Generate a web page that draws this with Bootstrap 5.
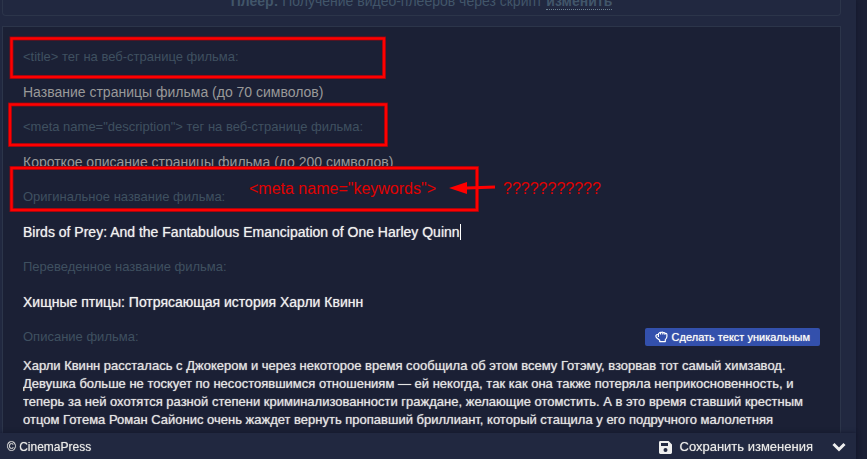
<!DOCTYPE html>
<html lang="ru">
<head>
<meta charset="utf-8">
<meta name="viewport" content="width=device-width, initial-scale=1">
<title>CinemaPress</title>
<link href="https://cdn.jsdelivr.net/npm/bootstrap@5.3.0/dist/css/bootstrap.min.css" rel="stylesheet">
<style>
body { background: #1b2035; color: #dcdcdc; font: 14px/18px "Liberation Sans", Arial, sans-serif; }
.app-main { background: #212840; margin-right: 11px; min-height: 100vh; box-shadow: 0 0 5px #12162a; padding: 0 15px 26px 2px; }
.hint-box { display: flow-root; border: 1px solid #2c354a; border-top: 0; border-radius: 0 0 4px 4px; color: #42566a; height: 16px; margin-bottom: 10px; }
.hint-box p { margin-top: -8px; }
.hint-box a { color: inherit; border-bottom: 1px dotted #6b7f90; }
.film-panel { background: #1b2035; border: 1px solid #2c354a; border-bottom: 0; padding: 21px 20px 0; gap: 10px; }
.film-label { color: #3f5060; font-size: 13px; line-height: 18px; }
.film-input { background: none; border: 0; outline: 0; padding: 0; height: 32px; line-height: 32px; color: #f0f0f0; text-shadow: 0 0 1px #bbb; resize: none; }
.film-input::placeholder { color: #999; opacity: 1; text-shadow: none; }
.film-text { height: 77px; line-height: 18px; padding-top: 1px; font-size: 13px; color: #e4e4e4; overflow: hidden; }
.title-field { width: 437px; box-sizing: content-box; border-right: 1px solid #fff; height: 16px; line-height: 16px; margin: 8px 0; }
.btn-unique { background: #3350ac; color: #fff; font-size: 11px; line-height: 18px; border-radius: 2px; padding: 0 10px; text-shadow: 0 0 1px #ccc; }
.app-footer { background: #212840; right: 11px; height: 26px; padding: 2px 7px 0; box-shadow: 0 0 4px #12162a; font-size: 12px; text-shadow: 0 0 1px #aaa; color: #e8e8e8; }
.btn-bar { color: inherit; font-size: 13px; line-height: 18px; text-shadow: inherit; }
.marks { position: absolute; inset: 0 auto auto 0; pointer-events: none; }
.marks text { font-size: 16px; fill: #e00000; }
</style>
<script src="https://cdn.jsdelivr.net/npm/bootstrap@5.3.0/dist/js/bootstrap.bundle.min.js"></script>
</head>
<body class="vh-100 overflow-hidden position-relative">
<main class="app-main">
  <div class="hint-box text-center"><p class="mb-0"><b>Плеер:</b> Получение видео-плееров через скрипт <a href="#" class="fw-bold text-decoration-none">изменить</a></p></div>
  <form class="film-panel d-flex flex-column">
    <label class="film-label" for="f1">&lt;title&gt; тег на веб-странице фильма:</label>
    <input class="film-input w-100" id="f1" type="text" placeholder="Название страницы фильма (до 70 символов)">
    <label class="film-label" for="f2">&lt;meta name="description"&gt; тег на веб-странице фильма:</label>
    <input class="film-input w-100" id="f2" type="text" placeholder="Короткое описание страницы фильма (до 200 символов)">
    <label class="film-label" for="f3">Оригинальное название фильма:</label>
    <input class="film-input title-field" id="f3" type="text" value="Birds of Prey: And the Fantabulous Emancipation of One Harley Quinn">
    <label class="film-label" for="f4">Переведенное название фильма:</label>
    <input class="film-input w-100" id="f4" type="text" value="Хищные птицы: Потрясающая история Харли Квинн">
    <div class="d-flex justify-content-between align-items-center">
      <label class="film-label" for="f5">Описание фильма:</label>
      <button type="button" class="btn btn-unique border-0 d-flex align-items-center gap-1"><svg width="13" height="12" viewBox="0 0 13 12" fill="none" stroke="#fff" stroke-width="1.2" stroke-linejoin="round" aria-hidden="true"><path d="M3.4 6V3.2Q3.4 2 4.4 2Q5 .9 6.2 1.5Q7.4.7 8.3 1.7Q9.6 1.3 10 2.4Q11.9 2 11.9 3.7V5.5Q11.9 7.2 10.3 8.6V10.6H4.7V9.2L1.6 6.8Q.6 5.6 1 4.4Q1.6 3.2 3.4 3.6M5.6 2V3.6M7.8 2V3.6M9.9 2.4V3.8"/></svg>Сделать текст уникальным</button>
    </div>
    <textarea class="film-input film-text w-100" id="f5" rows="4">Харли Квинн рассталась с Джокером и через некоторое время сообщила об этом всему Готэму, взорвав тот самый химзавод. Девушка больше не тоскует по несостоявшимся отношениям — ей некогда, так как она также потеряла неприкосновенность, и теперь за ней охотятся разной степени криминализованности граждане, желающие отомстить. А в это время ставший крестным отцом Готема Роман Сайонис очень жаждет вернуть пропавший бриллиант, который стащила у его подручного малолетняя</textarea>
  </form>
</main>
<footer class="app-footer fixed-bottom d-flex align-items-center justify-content-between">
  <span>© CinemaPress</span>
  <div class="d-flex align-items-center gap-3">
    <button type="button" class="btn btn-bar border-0 p-0 d-flex align-items-center gap-2"><svg width="13" height="13" viewBox="0 0 13 13" aria-hidden="true"><path fill="#eee" fill-rule="evenodd" d="M1.4 0H9.6L13 3.4V11.6Q13 13 11.6 13H1.4Q0 13 0 11.6V1.4Q0 0 1.4 0ZM2 2V5H9V2ZM6.5 7A2 2 0 1 0 6.5 11A2 2 0 1 0 6.5 7Z"/></svg>Сохранить изменения</button>
    <button type="button" class="btn btn-bar border-0 p-0 d-flex" aria-label="Свернуть"><svg width="20" height="10" viewBox="0 0 20 10" fill="none" stroke="#eee" stroke-width="3" aria-hidden="true"><path d="M4.5 2L10 7.5L15.500 2"/></svg></button>
  </div>
</footer>
<svg class="marks" width="620" height="220" aria-hidden="true">
  <path d="M11.5 38.5H384V77H11.5ZM10 104.5H386V145H10ZM11.5 168H477V210H11.5Z" fill="none" stroke="#8a0914" stroke-width="4"/>
  <path d="M11.5 38.5H384V77H11.5ZM10 104.5H386V145H10ZM11.5 168H477V210H11.5Z" fill="none" stroke="#f00" stroke-width="2.4"/>
  <path d="M467 188L495 187" stroke="#f00" stroke-width="3"/>
  <path d="M449 188L467 182V194Z" fill="#f00"/>
  <text x="249" y="194">&lt;meta name="keywords"&gt;</text>
  <text x="503" y="194">???????????</text>
</svg>
</body>
</html>
